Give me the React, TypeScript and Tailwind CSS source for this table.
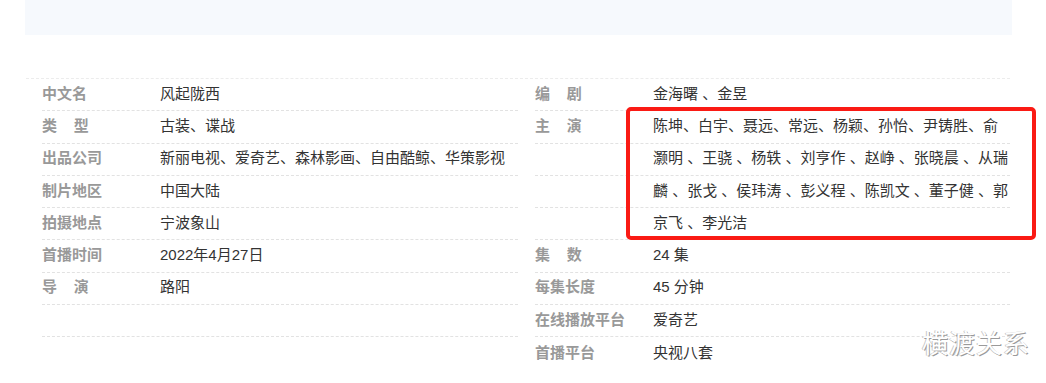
const left: [string, string][] = [
  ["中文名", "风起陇西"],
  ["类\u00a0\u00a0\u00a0\u00a0型", "古装、谍战"],
  ["出品公司", "新丽电视、爱奇艺、森林影画、自由酷鲸、华策影视"],
  ["制片地区", "中国大陆"],
  ["拍摄地点", "宁波象山"],
  ["首播时间", "2022年4月27日"],
  ["导\u00a0\u00a0\u00a0\u00a0演", "路阳"],
  ["", ""],
];

const right: [string, string][] = [
  ["编\u00a0\u00a0\u00a0\u00a0剧", "金海曙 、金昱"],
  ["主\u00a0\u00a0\u00a0\u00a0演", "陈坤、白宇、聂远、常远、杨颖、孙怡、尹铸胜、俞"],
  ["", "灏明 、王骁 、杨轶 、刘亨作 、赵峥 、张晓晨 、从瑞"],
  ["", "麟 、张戈 、侯玮涛 、彭义程 、陈凯文 、董子健 、郭"],
  ["", "京飞 、李光洁"],
  ["集\u00a0\u00a0\u00a0\u00a0数", "24 集"],
  ["每集长度", "45 分钟"],
  ["在线播放平台", "爱奇艺"],
  ["首播平台", "央视八套"],
];

const Row = ({ label, value, last }: { label: string; value: string; last?: boolean }) => (
  <div
    className={
      "flex items-center h-[32.3px] pb-[2px] whitespace-nowrap " +
      (last ? "" : "border-b border-dashed border-[#e2e2e2]")
    }
  >
    <div className="w-[118px] shrink-0 font-bold text-[#999]">{label}</div>
    <div className="text-[#333]">{value}</div>
  </div>
);

const App = () => {
  return (
    <div
      className="relative w-[1046px] h-[383px] bg-white overflow-hidden text-[15px] leading-[20px]"
      style={{ fontFamily: '"Liberation Sans", "Noto Sans CJK SC", sans-serif' }}
    >
      <div className="ml-[25px] w-[987px] h-[35px] bg-[#f6f9fd]" />
      <div className="mt-[43px] ml-[26px] flex gap-[2px]">
        <div className="w-[492px] border-t border-dashed border-[#ececec] pl-[16px]">
          {left.map(([l, v], i) => (
            <Row key={i} label={l} value={v} />
          ))}
        </div>
        <div className="w-[490px] border-t border-dashed border-[#ececec] pl-[15px]">
          {right.map(([l, v], i) => (
            <Row key={i} label={l} value={v} last={i === right.length - 1} />
          ))}
        </div>
      </div>

      <div className="absolute left-[626px] top-[107px] w-[410px] h-[133px] border-4 border-[#fa1a14] rounded-[5px]" />

      <div className="absolute left-[922px] top-[334px] text-[26px] tracking-[1px] text-white [text-shadow:1px_1px_0_#9a9a9a,-1px_0_0_#c8c8c8]">
        横渡关系
      </div>
    </div>
  );
};

export default App;
